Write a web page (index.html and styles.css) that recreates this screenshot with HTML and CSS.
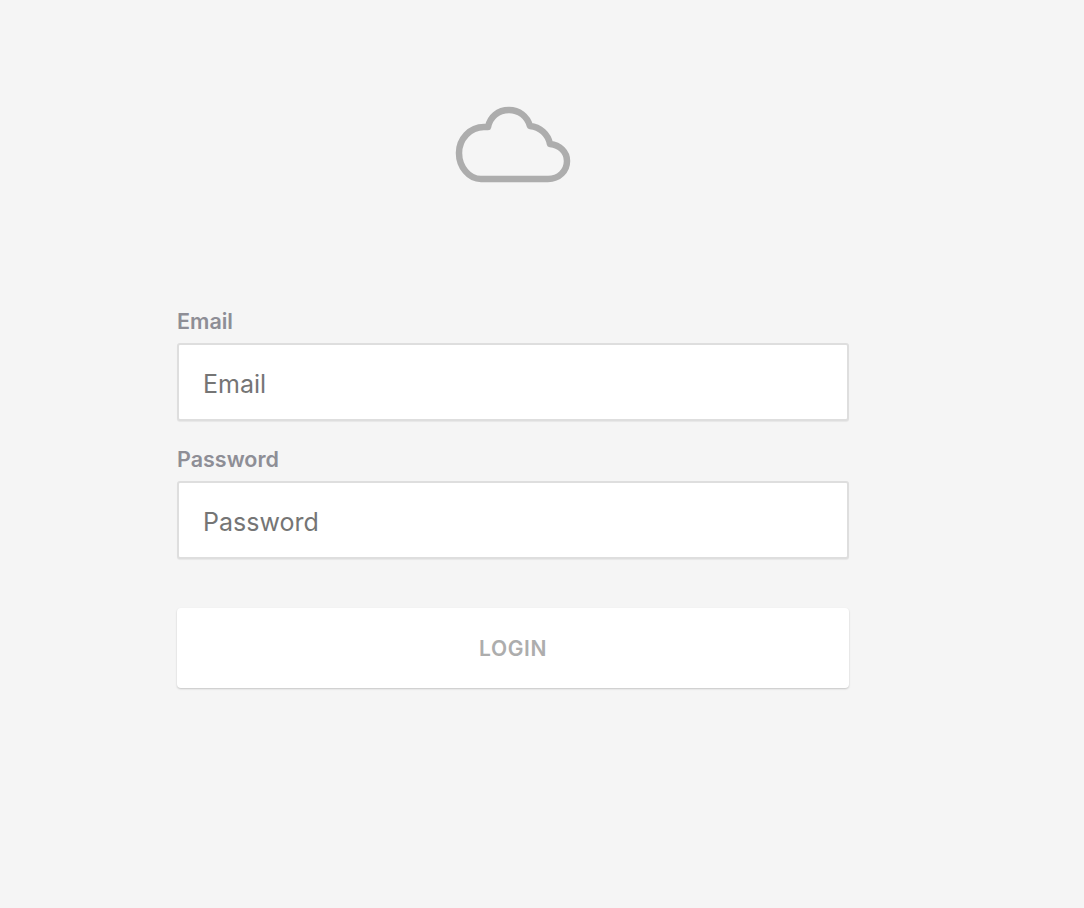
FILE: index.html
```html
<!DOCTYPE html>
<html lang="en">
<head>
<meta charset="utf-8">
<title>Login</title>
<link rel="stylesheet" href="styles.css">
</head>
<body>
<main class="page">
  <div class="logo">
    <svg class="cloud" width="124" height="85" viewBox="451 102 124 85" aria-hidden="true">
      <path d="M481 179H548C559 179 567 171 567 161C567 152 560 145 550 144C548 134 540 127 530 126C527 116 519 110 509 110C498 110 490 117 488 127H484C470 127 459 139 459 153C459 167 469 179 481 179Z"/>
    </svg>
  </div>
  <form class="form">
    <label class="field">
      <span class="label">Email</span>
      <input class="input" type="text" placeholder="Email">
    </label>
    <label class="field">
      <span class="label">Password</span>
      <input class="input" type="password" placeholder="Password">
    </label>
    <button class="button" type="button">LOGIN</button>
  </form>
</main>
</body>
</html>
```
FILE: styles.css
```css
* { box-sizing: border-box; }
html, body { margin: 0; height: 100%; }
body {
  background: #f5f5f5;
  font-family: Inter, Roboto, "Liberation Sans", sans-serif;
}
.page {
  width: 672px;
  margin-left: 177px;
  padding-top: 102px;
}
.logo {
  display: flex;
  justify-content: center;
  margin-bottom: 122px;
}
.cloud { display: block; }
.cloud path {
  fill: none;
  stroke: #adadad;
  stroke-width: 6.5;
  stroke-linejoin: round;
}
.form { display: flex; flex-direction: column; }
.field { display: flex; flex-direction: column; margin-bottom: 26px; }
.field:nth-of-type(2) { margin-bottom: 0; }
.label {
  font-size: 21.5px;
  font-weight: 600;
  line-height: 24px;
  color: #8e8e96;
  margin-bottom: 10px;
}
.input {
  width: 100%;
  height: 78px;
  padding: 3px 24px 0;
  border: 2px solid #dedede;
  border-radius: 3px;
  background: #fff;
  font: 400 25px Inter, Roboto, sans-serif;
  color: #757575;
  outline: none;
  box-shadow: 0 1px 1px rgba(0,0,0,.06);
}
.input::placeholder { color: #757575; opacity: 1; }
.button {
  margin-top: 49px;
  height: 80px;
  border: 0;
  border-radius: 4px;
  background: #fff;
  color: #adadad;
  font: 600 21px Inter, Roboto, sans-serif;
  letter-spacing: 0.6px;
  box-shadow: 0 1px 2px rgba(0,0,0,.2);
}
```
